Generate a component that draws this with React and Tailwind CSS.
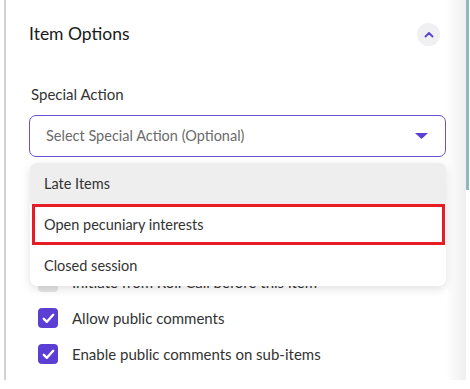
import React from "react";

const options = ["Late Items", "Open pecuniary interests", "Closed session"];

function Check({ checked, label }) {
  return (
    <div className="flex items-center h-[20px] gap-[14px] pl-[9px]">
      <span
        className={`w-[20px] h-[20px] rounded-[4px] flex items-center justify-center ${
          checked ? "bg-[#5b3fd4]" : "bg-[#e4e4e7]"
        }`}
      >
        {checked && (
          <svg width="13" height="11" viewBox="0 0 13 11" fill="none">
            <path d="M1.8 5.8 L4.9 8.8 L11.2 1.8" stroke="white" strokeWidth="2.4" strokeLinecap="round" strokeLinejoin="round" />
          </svg>
        )}
      </span>
      <span className="text-[15px] text-[#333]">{label}</span>
    </div>
  );
}

export default function App() {
  return (
    <div className="w-[470px] h-[389px] bg-white overflow-hidden font-['Lato','Noto_Sans',sans-serif]">
      <div className="flex h-[380px]">
        <div className="w-[4px]" />
        <div className="w-[2px] bg-[#d2d2d2]" />

        {/* Panel */}
        <div className="flex-1 pl-[23px] pt-[22px] relative">
          <div className="flex items-center justify-between h-[24px] pr-[6px]">
            <h2 className="text-[17.5px] text-[#1a1a1a]">Item Options</h2>
            <button className="w-[23px] h-[23px] rounded-full bg-[#f0f0f3] flex items-center justify-center">
              <svg width="10" height="7" viewBox="0 0 10 7" fill="none">
                <path d="M1.5 5.5 L5 2 L8.5 5.5" stroke="#5b3fd4" strokeWidth="1.8" strokeLinecap="round" strokeLinejoin="round" />
              </svg>
            </button>
          </div>

          <div className="mt-[38px] pl-[2px] text-[15px] leading-[20px] text-[#333]">Special Action</div>

          <div className="relative mt-[11px]">
            <div className="h-[42px] border border-[#6a50d8] rounded-[7px] flex items-center justify-between pl-[16px] pr-[17px]">
              <span className="text-[14.5px] text-[#6b6b6b]">Select Special Action (Optional)</span>
              <svg width="13" height="6" viewBox="0 0 13 6">
                <path d="M0 0 H13 L6.5 6 Z" fill="#5b3fd4" />
              </svg>
            </div>

            {/* Dropdown menu */}
            <div className="absolute left-[1px] right-0 top-[48px] bg-white rounded-[7px] shadow-[0_3px_10px_rgba(0,0,0,0.12)] overflow-hidden z-10">
              {options.map((o, i) => (
                <div
                  key={o}
                  className={`h-[41px] flex items-center text-[14.5px] text-[#333] ${
                    i === 0 ? "bg-[#eeeeee] pl-[14px]" : ""
                  } ${i === 1 ? "border-[3px] border-[#e81c24] pl-[9px] ml-[2px] mr-[1px]" : ""} ${
                    i === 2 ? "pl-[14px]" : ""
                  }`}
                >
                  {o}
                </div>
              ))}
            </div>
          </div>

          <div className="mt-[115px] flex flex-col gap-[16px]">
            <Check checked={false} label="Initiate from Roll Call before this item" />
            <Check checked label="Allow public comments" />
            <Check checked label="Enable public comments on sub-items" />
          </div>
        </div>

        <div className="w-[20px] bg-gradient-to-r from-white to-[#efefef]" />
        <div className="w-[4px]">
          <div className="w-[3px] h-[190px] bg-[#8fb8c4]" />
        </div>
      </div>
    </div>
  );
}
